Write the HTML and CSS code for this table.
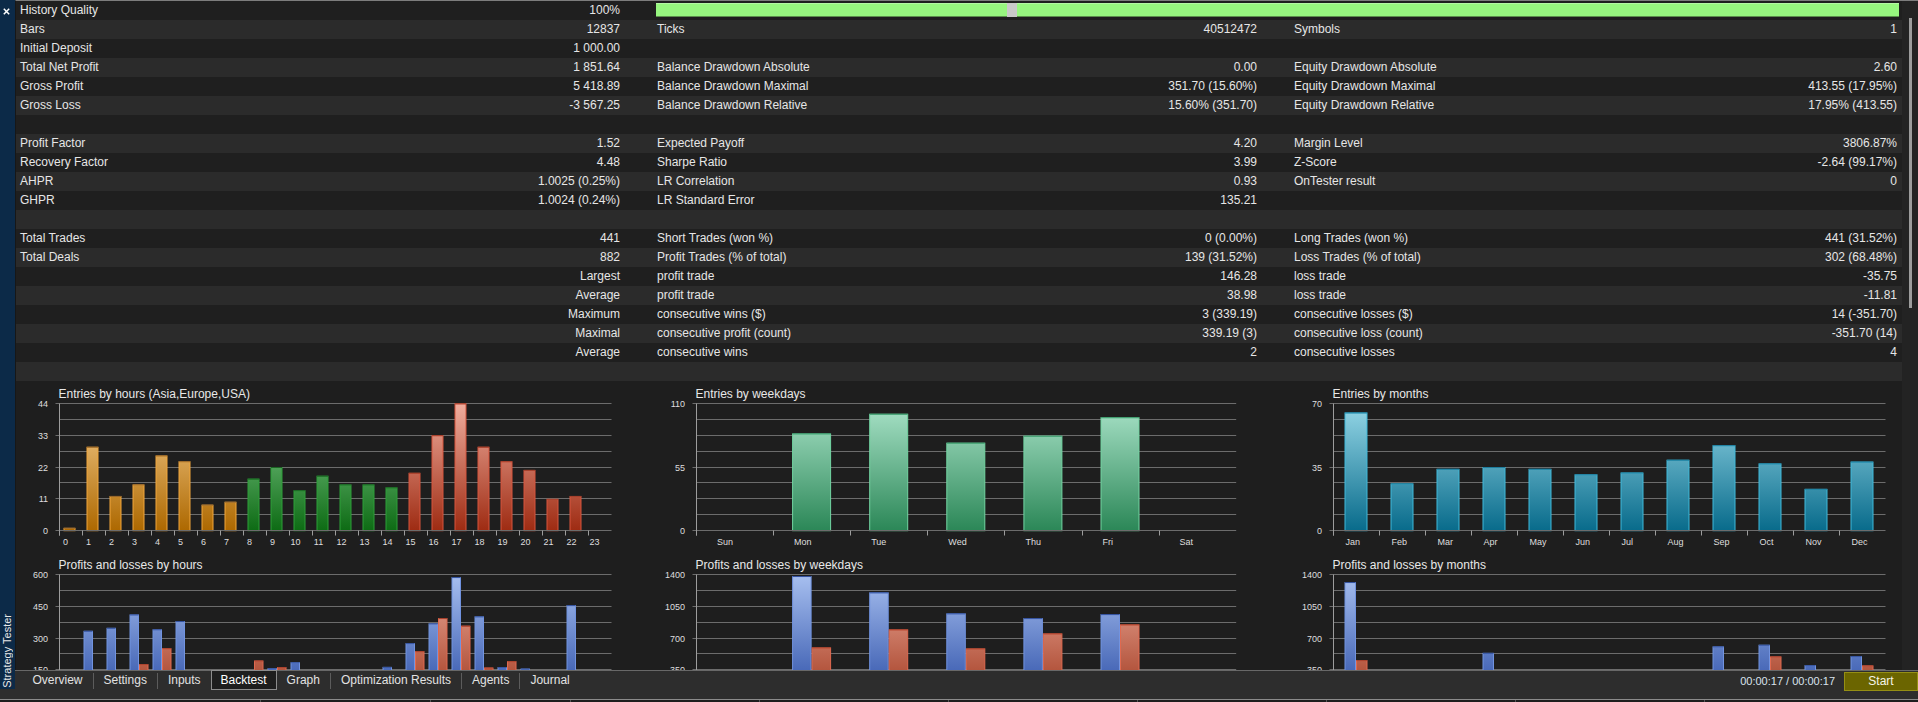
FILE: index.html
```html
<!DOCTYPE html>
<html lang="en">
<head>
<meta charset="utf-8">
<title>Strategy Tester - Backtest</title>
<link rel="stylesheet" href="styles.css">
</head>
<body>
<div class="app">
  <aside class="side">
    <div class="side-blue">
      <svg class="close" width="7" height="7" viewBox="0 0 7 7"><path d="M0.8 0.8L6.2 6.2M6.2 0.8L0.8 6.2" stroke="#ffffff" stroke-width="1.5"/></svg>
      <div class="side-title">Strategy Tester</div>
    </div>
  </aside>

  <main class="main">
    <div class="content">
      <div class="stats">
        <div class="row">
          <div class="cell"><span class="lbl">History Quality</span><span class="val">100%</span></div>
          <div class="cell-bar"><div class="quality"><div class="quality-mark"></div></div></div>
        </div>
        <div class="row">
          <div class="cell"><span class="lbl">Bars</span><span class="val">12837</span></div>
          <div class="cell"><span class="lbl">Ticks</span><span class="val">40512472</span></div>
          <div class="cell"><span class="lbl">Symbols</span><span class="val">1</span></div>
        </div>
        <div class="row">
          <div class="cell"><span class="lbl">Initial Deposit</span><span class="val">1 000.00</span></div>
          <div class="cell"></div>
          <div class="cell"></div>
        </div>
        <div class="row">
          <div class="cell"><span class="lbl">Total Net Profit</span><span class="val">1 851.64</span></div>
          <div class="cell"><span class="lbl">Balance Drawdown Absolute</span><span class="val">0.00</span></div>
          <div class="cell"><span class="lbl">Equity Drawdown Absolute</span><span class="val">2.60</span></div>
        </div>
        <div class="row">
          <div class="cell"><span class="lbl">Gross Profit</span><span class="val">5 418.89</span></div>
          <div class="cell"><span class="lbl">Balance Drawdown Maximal</span><span class="val">351.70 (15.60%)</span></div>
          <div class="cell"><span class="lbl">Equity Drawdown Maximal</span><span class="val">413.55 (17.95%)</span></div>
        </div>
        <div class="row">
          <div class="cell"><span class="lbl">Gross Loss</span><span class="val">-3 567.25</span></div>
          <div class="cell"><span class="lbl">Balance Drawdown Relative</span><span class="val">15.60% (351.70)</span></div>
          <div class="cell"><span class="lbl">Equity Drawdown Relative</span><span class="val">17.95% (413.55)</span></div>
        </div>
        <div class="row"><div class="cell"></div><div class="cell"></div><div class="cell"></div></div>
        <div class="row">
          <div class="cell"><span class="lbl">Profit Factor</span><span class="val">1.52</span></div>
          <div class="cell"><span class="lbl">Expected Payoff</span><span class="val">4.20</span></div>
          <div class="cell"><span class="lbl">Margin Level</span><span class="val">3806.87%</span></div>
        </div>
        <div class="row">
          <div class="cell"><span class="lbl">Recovery Factor</span><span class="val">4.48</span></div>
          <div class="cell"><span class="lbl">Sharpe Ratio</span><span class="val">3.99</span></div>
          <div class="cell"><span class="lbl">Z-Score</span><span class="val">-2.64 (99.17%)</span></div>
        </div>
        <div class="row">
          <div class="cell"><span class="lbl">AHPR</span><span class="val">1.0025 (0.25%)</span></div>
          <div class="cell"><span class="lbl">LR Correlation</span><span class="val">0.93</span></div>
          <div class="cell"><span class="lbl">OnTester result</span><span class="val">0</span></div>
        </div>
        <div class="row">
          <div class="cell"><span class="lbl">GHPR</span><span class="val">1.0024 (0.24%)</span></div>
          <div class="cell"><span class="lbl">LR Standard Error</span><span class="val">135.21</span></div>
          <div class="cell"></div>
        </div>
        <div class="row"><div class="cell"></div><div class="cell"></div><div class="cell"></div></div>
        <div class="row">
          <div class="cell"><span class="lbl">Total Trades</span><span class="val">441</span></div>
          <div class="cell"><span class="lbl">Short Trades (won %)</span><span class="val">0 (0.00%)</span></div>
          <div class="cell"><span class="lbl">Long Trades (won %)</span><span class="val">441 (31.52%)</span></div>
        </div>
        <div class="row">
          <div class="cell"><span class="lbl">Total Deals</span><span class="val">882</span></div>
          <div class="cell"><span class="lbl">Profit Trades (% of total)</span><span class="val">139 (31.52%)</span></div>
          <div class="cell"><span class="lbl">Loss Trades (% of total)</span><span class="val">302 (68.48%)</span></div>
        </div>
        <div class="row">
          <div class="cell"><span class="lbl"></span><span class="val">Largest</span></div>
          <div class="cell"><span class="lbl">profit trade</span><span class="val">146.28</span></div>
          <div class="cell"><span class="lbl">loss trade</span><span class="val">-35.75</span></div>
        </div>
        <div class="row">
          <div class="cell"><span class="lbl"></span><span class="val">Average</span></div>
          <div class="cell"><span class="lbl">profit trade</span><span class="val">38.98</span></div>
          <div class="cell"><span class="lbl">loss trade</span><span class="val">-11.81</span></div>
        </div>
        <div class="row">
          <div class="cell"><span class="lbl"></span><span class="val">Maximum</span></div>
          <div class="cell"><span class="lbl">consecutive wins ($)</span><span class="val">3 (339.19)</span></div>
          <div class="cell"><span class="lbl">consecutive losses ($)</span><span class="val">14 (-351.70)</span></div>
        </div>
        <div class="row">
          <div class="cell"><span class="lbl"></span><span class="val">Maximal</span></div>
          <div class="cell"><span class="lbl">consecutive profit (count)</span><span class="val">339.19 (3)</span></div>
          <div class="cell"><span class="lbl">consecutive loss (count)</span><span class="val">-351.70 (14)</span></div>
        </div>
        <div class="row">
          <div class="cell"><span class="lbl"></span><span class="val">Average</span></div>
          <div class="cell"><span class="lbl">consecutive wins</span><span class="val">2</span></div>
          <div class="cell"><span class="lbl">consecutive losses</span><span class="val">4</span></div>
        </div>
        <div class="row"><div class="cell"></div><div class="cell"></div><div class="cell"></div></div>
      </div>

      <div class="charts">
        <div class="chart-col" id="col-hours"></div>
        <div class="chart-col" id="col-weekdays"></div>
        <div class="chart-col" id="col-months"></div>
      </div>
    </div>
    <div class="vscroll"><div class="thumb"></div></div>
  </main>

  <nav class="tabbar">
    <div class="tabs">
      <div class="tab">Overview</div>
      <div class="sep"></div>
      <div class="tab">Settings</div>
      <div class="sep"></div>
      <div class="tab">Inputs</div>
      <div class="tab tab-active">Backtest</div>
      <div class="tab">Graph</div>
      <div class="sep"></div>
      <div class="tab">Optimization Results</div>
      <div class="sep"></div>
      <div class="tab">Agents</div>
      <div class="sep"></div>
      <div class="tab">Journal</div>
    </div>
    <div class="tab-right">
      <div class="time">00:00:17 / 00:00:17</div>
      <div class="start">Start</div>
    </div>
  </nav>

  <div class="status">
    <div class="st st1"></div>
    <div class="st st2"></div>
    <div class="st st3"></div>
    <div class="st st4"></div>
    <div class="st st4"></div>
    <div class="st st4"></div>
    <div class="st st4"></div>
    <div class="st st4"></div>
    <div class="st st4"></div>
  </div>
</div>
<script src="script.js"></script>
</body>
</html>
```

FILE: styles.css
```css
* { box-sizing: border-box; margin: 0; padding: 0; }
html, body { width: 1918px; height: 702px; overflow: hidden; background: #1e1e1e; }
body { font-family: "Liberation Sans", Arial, sans-serif; font-size: 12px; color: #e6e6e6; }

.app {
  display: grid;
  grid-template-columns: 15px 1fr;
  grid-template-rows: 670px 29px 3px;
  width: 1918px;
  height: 702px;
}

/* left vertical bar */
.side { grid-column: 1; grid-row: 1 / 3; background: #2d2d2d; }
.side-blue {
  height: 689px;
  background: #0c2a48;
  display: flex;
  flex-direction: column;
  justify-content: space-between;
  padding: 8px 0 1px;
}
.close { display: block; margin-left: 3px; }
.side-title {
  writing-mode: vertical-rl;
  transform: rotate(180deg);
  font-size: 11px;
  line-height: 15px;
  color: #e8e8e8;
  white-space: nowrap;
}

/* main area */
.main {
  grid-column: 2;
  grid-row: 1;
  display: flex;
  border-top: 1px solid #7d7d7d;
  border-left: 1px solid #171717;
  overflow: hidden;
  min-width: 0;
}
.content { width: 1886px; flex: none; display: flex; flex-direction: column; min-height: 0; }

.stats { flex: none; }
.row {
  display: grid;
  grid-template-columns: 637px 637px 612px;
  height: 19px;
  line-height: 19px;
  background: #1f1f1f;
}
.row:nth-child(even) { background: #2b2b2b; }
.cell { display: flex; padding: 0 33px 0 4px; white-space: nowrap; overflow: hidden; }
.cell:nth-child(3) { padding-right: 5px; }
.lbl { flex: 1; }
.val { flex: none; }

.cell-bar { grid-column: 2 / 4; padding: 2px 3px 0 3px; }
.quality {
  height: 14px;
  display: flex;
  background: #97f67f;
  box-shadow: inset 0 -1px 0 #5b8f4c, inset 0 1px 0 #b5f7a5;
}
.quality-mark { width: 10px; margin-left: 351px; background: #c9c9c9; }

.charts {
  flex: 1;
  min-height: 0;
  display: grid;
  grid-template-columns: 637px 637px 612px;
  overflow: hidden;
  background: #1e1e1e;
}
.chart-col { display: flex; flex-direction: column; min-height: 0; overflow: hidden; }
.chart { display: block; flex: none; }
.chart .grid { stroke: #6c6c6c; stroke-width: 1; }
.chart .axis { stroke: #9d9d9d; stroke-width: 1; }
.chart .ctitle { font-family: "Liberation Sans", Arial, sans-serif; font-size: 12px; fill: #e8e8e8; }
.chart .ylab { font-family: "Liberation Sans", Arial, sans-serif; font-size: 9px; fill: #dedede; text-anchor: end; }
.chart .xlab { font-family: "Liberation Sans", Arial, sans-serif; font-size: 9px; fill: #dedede; }
.chart .xlab-mid { text-anchor: middle; }

.vscroll { flex: 1; background: #232323; }
.thumb { width: 3px; height: 290px; margin: 17px 0 0 7px; background: #9c9c9c; }

/* tab bar */
.tabbar {
  grid-column: 2;
  grid-row: 2;
  display: flex;
  align-items: flex-start;
  background: #2d2d2d;
  border-top: 1px solid #686868;
  padding-left: 7.5px;
}
.tabs { display: flex; align-items: flex-start; }
.tab {
  height: 20px;
  line-height: 18px;
  padding: 0 9px;
  border: 1px solid transparent;
  margin-top: -1px;
  color: #e2e2e2;
  white-space: nowrap;
}
.tab-active { background: #1e1e1e; border-color: #8c8c8c; color: #ffffff; }
.sep { width: 1px; height: 16px; margin-top: 2px; background: #5c5c5c; }

.tab-right { margin-left: auto; display: flex; align-items: flex-start; }
.time { font-size: 11px; line-height: 19px; margin-top: 1px; margin-right: 9px; color: #d9e3ee; white-space: nowrap; }
.start {
  width: 74px;
  height: 19px;
  margin-top: 1px;
  background: #6b6500;
  border: 1px solid #958f14;
  text-align: center;
  line-height: 17px;
  color: #f4f4e8;
}

/* status strip */
.status {
  grid-column: 1 / 3;
  grid-row: 3;
  display: flex;
  background: #1e1e1e;
  border-top: 1px solid #8a8a8a;
}
.st { flex: none; border-right: 1px solid #555555; }
.st1 { width: 261px; }
.st2 { width: 170px; }
.st3 { width: 140px; }
.st4 { width: 189px; }
```

FILE: script.js
```js
(function () {
  var NS = 'http://www.w3.org/2000/svg';
  var Y0 = 22.3, PH = 127.4, YB = Y0 + PH, AX = 43.5;
  var PAL = {
    orange: { t: '#f8d092', b: '#ad6800', s: '#f2a63a', e: '#94652a' },
    green:  { t: '#8fd59a', b: '#0d6b14', s: '#2c9f38', e: '#1c6424' },
    red:    { t: '#f0ae9f', b: '#9e2b12', s: '#d7543c', e: '#a4402c' },
    mint:   { t: '#aae3c9', b: '#2b8757', s: '#72d5a2', e: '#3c9a6c' },
    cyan:   { t: '#97d8e8', b: '#086b8b', s: '#3fbadb', e: '#1e7d9d' },
    blue:   { t: '#a8c0f0', b: '#2a4da6', s: '#7193e0', e: '#34529e' },
    loss:   { t: '#f0b0a0', b: '#a0381e', s: '#e0694f', e: '#a8402c' }
  };
  var uid = 0;

  function el(tag, attrs, parent, text) {
    var e = document.createElementNS(NS, tag);
    for (var k in attrs) e.setAttribute(k, attrs[k]);
    if (text != null) e.textContent = text;
    if (parent) parent.appendChild(e);
    return e;
  }

  /* c.visible: height (px, from chart top) that is actually on screen;
     texts entirely below it are not drawn since the reference never shows them */
  function chart(parent, c) {
    uid++;
    var vis = c.visible || 999;
    var svg = el('svg', { 'class': 'chart', width: c.w, height: 171, viewBox: '0 0 ' + c.w + ' 171' }, parent);
    var defs = el('defs', {}, svg);
    var made = {};
    function grad(p) {
      var id = 'g' + uid + p;
      if (!made[p]) {
        var g = el('linearGradient', { id: id, gradientUnits: 'userSpaceOnUse', x1: 0, y1: Y0, x2: 0, y2: YB }, defs);
        el('stop', { offset: '0', 'stop-color': PAL[p].t }, g);
        el('stop', { offset: '1', 'stop-color': PAL[p].b }, g);
        made[p] = true;
      }
      return id;
    }
    var right = AX + c.n * c.slot;

    el('text', { 'class': 'ctitle', x: 42.5, y: 17.3 }, svg, c.title);

    for (var i = 0; i <= 8; i++) {
      var y = Math.floor(Y0 + i * PH / 8) + 0.5;
      var major = i % c.every === 0;
      if (i < 8) el('line', { 'class': 'grid', x1: AX - (major ? 4 : 0), x2: right, y1: y, y2: y }, svg);
      if (major && y - 4 < vis) el('text', { 'class': 'ylab', x: AX - 11.5, y: y + 3.2 }, svg, c.ylabels[i / c.every]);
    }

    c.series.forEach(function (s) {
      s.values.forEach(function (v, idx) {
        if (!v) return;
        var p = typeof s.pal === 'function' ? s.pal(idx) : s.pal;
        var h = v / c.max * PH;
        var x = AX + idx * c.slot + s.off;
        var top = YB - h;
        el('rect', {
          x: x + 0.5, y: top + 0.5, width: s.w - 1, height: Math.max(h - 0.5, 0.5),
          fill: 'url(#' + grad(p) + ')', stroke: PAL[p].s, 'stroke-width': 1
        }, svg);
        el('line', { x1: x + 0.5, x2: x + s.w - 0.5, y1: top + 0.5, y2: top + 0.5, stroke: PAL[p].e, 'stroke-width': 1 }, svg);
      });
    });

    var yb = Math.floor(YB) + 0.5;
    el('line', { 'class': 'grid', x1: AX - 4, x2: right, y1: yb, y2: yb }, svg);
    el('line', { 'class': 'axis', x1: AX, x2: AX, y1: Math.floor(Y0) + 0.5, y2: yb + 5 }, svg);

    for (var t = 0; t < c.n; t++) {
      var tx = Math.floor(AX + t * c.slot) + 0.5;
      el('line', { 'class': 'axis', x1: tx, x2: tx, y1: yb, y2: yb + 5 }, svg);
      if (163.9 - 8 < vis) {
        var lx = AX + t * c.slot + c.xoff;
        el('text', { 'class': 'xlab' + (c.mid ? ' xlab-mid' : ''), x: lx, y: 163.9 }, svg, c.xl[t]);
      }
    }
  }

  var hours = [];
  for (var h = 0; h < 24; h++) hours.push(String(h));
  var hourPal = function (i) { return i < 8 ? 'orange' : (i < 15 ? 'green' : 'red'); };
  var days = ['Sun', 'Mon', 'Tue', 'Wed', 'Thu', 'Fri', 'Sat'];
  var months = ['Jan', 'Feb', 'Mar', 'Apr', 'May', 'Jun', 'Jul', 'Aug', 'Sep', 'Oct', 'Nov', 'Dec'];

  var c1 = document.getElementById('col-hours');
  var c2 = document.getElementById('col-weekdays');
  var c3 = document.getElementById('col-months');
  var LOWER_VISIBLE = 118;

  chart(c1, {
    w: 637, title: 'Entries by hours (Asia,Europe,USA)', max: 44, every: 2,
    ylabels: ['44', '33', '22', '11', '0'], n: 24, slot: 23, xl: hours, mid: true, xoff: 6,
    series: [{ off: 4, w: 12, pal: hourPal,
      values: [1, 29, 12, 16, 26, 24, 9, 10, 18, 22, 14, 19, 16, 16, 15, 20, 33, 44, 29, 24, 21, 11, 12, 0] }]
  });
  chart(c1, {
    w: 637, title: 'Profits and losses by hours', max: 600, every: 2, visible: LOWER_VISIBLE,
    ylabels: ['600', '450', '300', '150', '0'], n: 24, slot: 23, xl: hours, mid: true, xoff: 6,
    series: [
      { off: 1, w: 9.5, pal: 'blue',
        values: [60, 334, 348, 411, 341, 380, 40, 50, 90, 158, 186, 100, 80, 70, 164, 276, 369, 587, 402, 163, 156, 90, 455, 0] },
      { off: 10.5, w: 9.5, pal: 'loss',
        values: [20, 120, 100, 177, 252, 130, 60, 70, 194, 163, 110, 90, 80, 60, 100, 238, 394, 358, 161, 191, 120, 80, 110, 0] }
    ]
  });

  chart(c2, {
    w: 637, title: 'Entries by weekdays', max: 110, every: 4,
    ylabels: ['110', '55', '0'], n: 7, slot: 77.1, xl: days, mid: false, xoff: 20.5,
    series: [{ off: 18.5, w: 39, pal: 'mint', values: [0, 84, 101, 76, 82, 98, 0] }]
  });
  chart(c2, {
    w: 637, title: 'Profits and losses by weekdays', max: 1400, every: 2, visible: LOWER_VISIBLE,
    ylabels: ['1400', '1050', '700', '350', '0'], n: 7, slot: 77.1, xl: days, mid: false, xoff: 20.5,
    series: [
      { off: 18.5, w: 19.5, pal: 'blue', values: [0, 1381, 1202, 971, 919, 963, 0] },
      { off: 38, w: 19.5, pal: 'loss', values: [0, 597, 795, 586, 751, 850, 0] }
    ]
  });

  chart(c3, {
    w: 612, title: 'Entries by months', max: 70, every: 4,
    ylabels: ['70', '35', '0'], n: 12, slot: 46, xl: months, mid: false, xoff: 12,
    series: [{ off: 11, w: 23, pal: 'cyan', values: [65, 26, 34, 35, 34, 31, 32, 39, 47, 37, 23, 38] }]
  });
  chart(c3, {
    w: 612, title: 'Profits and losses by months', max: 1400, every: 2, visible: LOWER_VISIBLE,
    ylabels: ['1400', '1050', '700', '350', '0'], n: 12, slot: 46, xl: months, mid: false, xoff: 12,
    series: [
      { off: 11, w: 11.5, pal: 'blue', values: [1315, 200, 250, 537, 300, 150, 200, 250, 608, 626, 402, 501] },
      { off: 22.5, w: 11.5, pal: 'loss', values: [457, 300, 250, 280, 320, 200, 250, 300, 300, 498, 250, 399] }
    ]
  });
})();
```
